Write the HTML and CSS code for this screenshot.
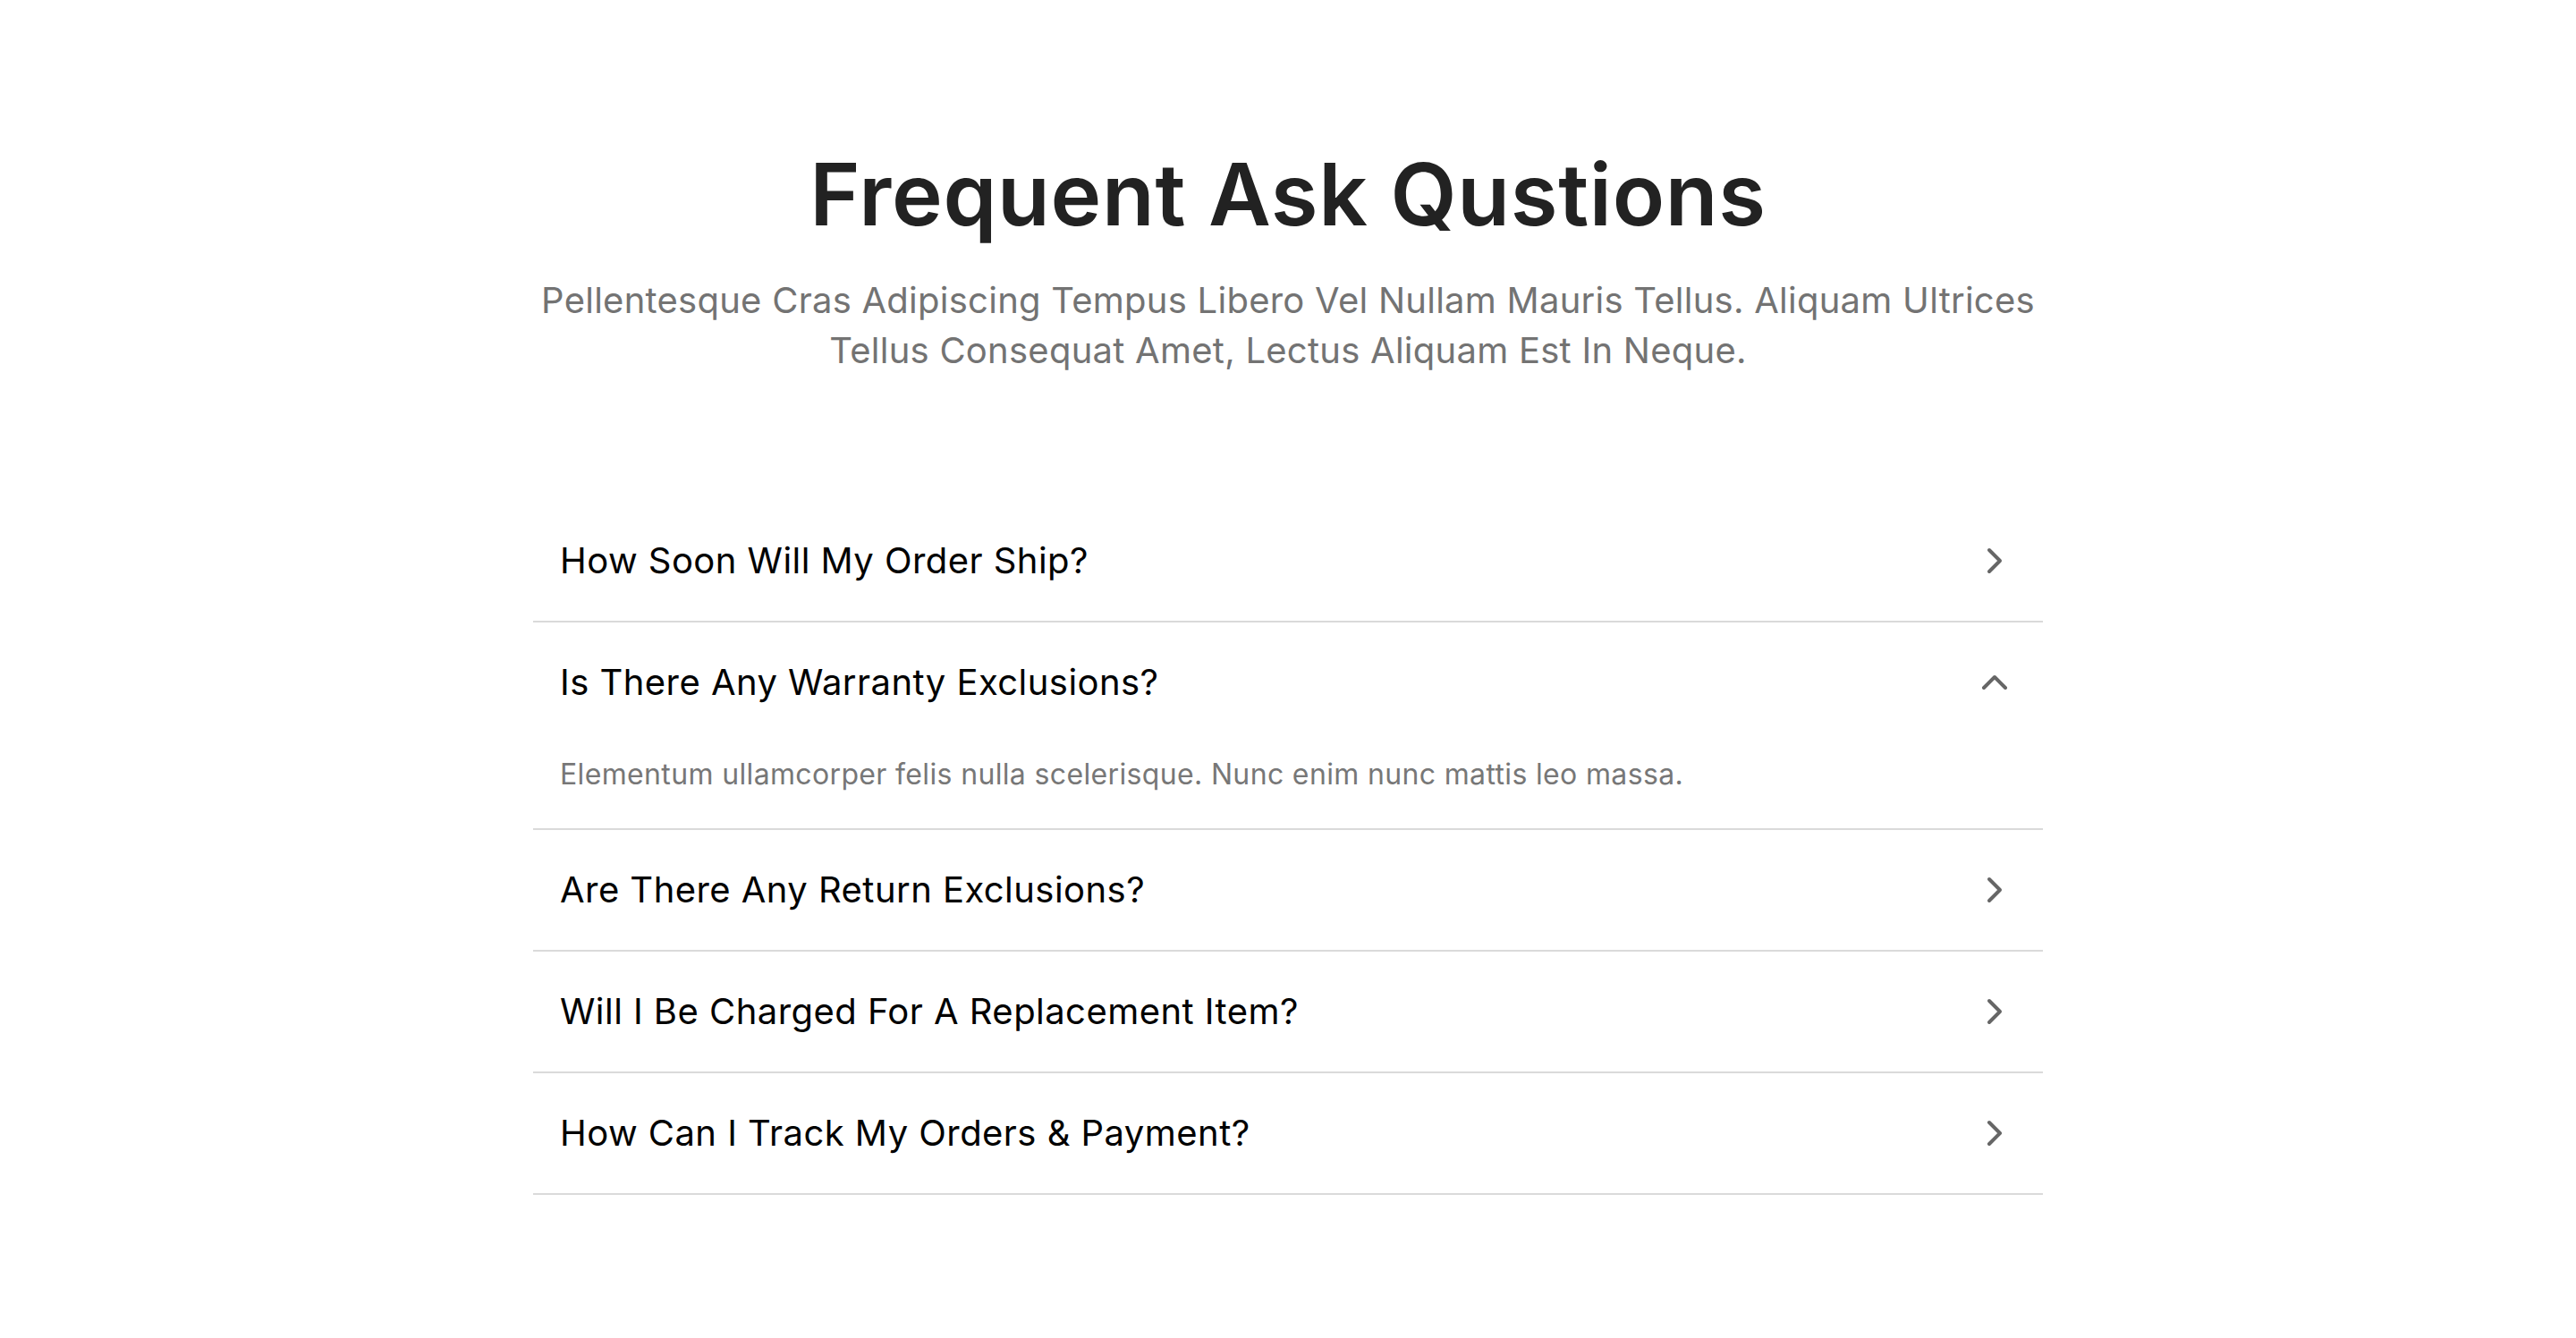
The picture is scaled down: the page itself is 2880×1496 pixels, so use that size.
FILE: index.html
```html
<!DOCTYPE html>
<html lang="en">
<head>
<meta charset="utf-8">
<title>FAQ</title>
<link rel="stylesheet" href="styles.css">
</head>
<body>
<section class="faq">
  <header class="faq-head">
    <h1 class="faq-title">Frequent Ask Qustions</h1>
    <p class="faq-sub">Pellentesque Cras Adipiscing Tempus Libero Vel Nullam Mauris Tellus. Aliquam Ultrices Tellus Consequat Amet, Lectus Aliquam Est In Neque.</p>
  </header>
  <div class="faq-list">
    <div class="faq-item">
      <div class="faq-q">
        <span class="faq-q-text">How Soon Will My Order Ship?</span>
        <svg class="chev" viewBox="0 0 24 24" fill="none" stroke="currentColor" stroke-width="2" stroke-linecap="round" stroke-linejoin="round"><path d="m9 18 6-6-6-6"/></svg>
      </div>
    </div>
    <div class="faq-item open">
      <div class="faq-q">
        <span class="faq-q-text">Is There Any Warranty Exclusions?</span>
        <svg class="chev" viewBox="0 0 24 24" fill="none" stroke="currentColor" stroke-width="2" stroke-linecap="round" stroke-linejoin="round"><path d="m18 15-6-6-6 6"/></svg>
      </div>
      <p class="faq-a">Elementum ullamcorper felis nulla scelerisque. Nunc enim nunc mattis leo massa.</p>
    </div>
    <div class="faq-item">
      <div class="faq-q">
        <span class="faq-q-text">Are There Any Return Exclusions?</span>
        <svg class="chev" viewBox="0 0 24 24" fill="none" stroke="currentColor" stroke-width="2" stroke-linecap="round" stroke-linejoin="round"><path d="m9 18 6-6-6-6"/></svg>
      </div>
    </div>
    <div class="faq-item">
      <div class="faq-q">
        <span class="faq-q-text">Will I Be Charged For A Replacement Item?</span>
        <svg class="chev" viewBox="0 0 24 24" fill="none" stroke="currentColor" stroke-width="2" stroke-linecap="round" stroke-linejoin="round"><path d="m9 18 6-6-6-6"/></svg>
      </div>
    </div>
    <div class="faq-item">
      <div class="faq-q">
        <span class="faq-q-text">How Can I Track My Orders &amp; Payment?</span>
        <svg class="chev" viewBox="0 0 24 24" fill="none" stroke="currentColor" stroke-width="2" stroke-linecap="round" stroke-linejoin="round"><path d="m9 18 6-6-6-6"/></svg>
      </div>
    </div>
  </div>
</section>
</body>
</html>
```

FILE: styles.css
```css
* { box-sizing: border-box; }
html, body {
  margin: 0;
  padding: 0;
  background: #ffffff;
}
body {
  font-family: Inter, "Noto Sans", "Liberation Sans", sans-serif;
  color: #111111;
}
.faq {
  width: 1688px;
  margin: 0 auto;
  padding-top: 159px;
}
.faq-head {
  display: flex;
  flex-direction: column;
  align-items: center;
  text-align: center;
}
.faq-title {
  margin: 0;
  font-size: 96px;
  line-height: 116px;
  font-weight: 600;
  color: #222222;
  letter-spacing: 0.7px;
}
.faq-sub {
  margin: 33px 0 0;
  font-size: 40px;
  line-height: 56px;
  font-weight: 400;
  color: #737373;
  letter-spacing: 0.25px;
}
.faq-list {
  margin-top: 140px;
  display: flex;
  flex-direction: column;
}
.faq-item {
  border-bottom: 2px solid #dadada;
}
.faq-q {
  height: 134px;
  padding: 0 30px;
  display: flex;
  align-items: center;
  justify-content: space-between;
}
.faq-q-text {
  font-size: 40px;
  line-height: 48px;
  font-weight: 400;
  color: #000000;
  letter-spacing: 0.45px;
}
.chev {
  width: 48px;
  height: 48px;
  color: #666666;
  flex: none;
}
.faq-a {
  margin: 0;
  padding: 12px 30px 36px;
  font-size: 32px;
  line-height: 48px;
  color: #777777;
  letter-spacing: 0.35px;
}
```
